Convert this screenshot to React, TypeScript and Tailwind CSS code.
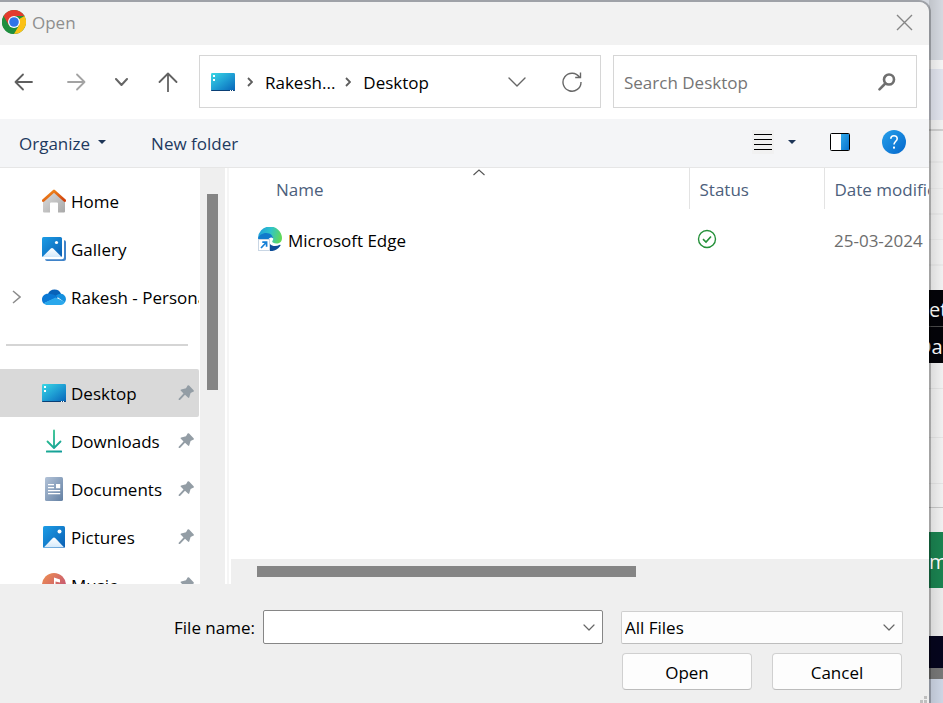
import type { ReactNode } from "react";

const FONT = "font-['Open_Sans','Noto_Sans',sans-serif]";

function ChromeIcon() {
  return (
    <svg width="24" height="24" viewBox="0 0 24 24" aria-hidden="true">
      <circle cx="12" cy="12" r="12" fill="#1e8e3e" />
      <path d="M12 12 L22.4 6 A12 12 0 0 1 12 24 L8 18 Z" fill="#fbc116" />
      <path d="M12 12 L1.6 6 A12 12 0 0 0 12 24 L17.2 15 Z" fill="#1e8e3e" />
      <path d="M1.6 6 A12 12 0 0 1 22.4 6 L12 6 L6.8 15 Z" fill="#e33b2e" />
      <circle cx="12" cy="12" r="6" fill="#fff" />
      <circle cx="12" cy="12" r="4.8" fill="#2f74e8" />
    </svg>
  );
}

function DesktopIcon() {
  return (
    <svg width="24" height="18" viewBox="0 0 24 18" aria-hidden="true">
      <defs>
        <linearGradient id="desktop-fill" x1="0" y1="0" x2="1" y2="1">
          <stop offset="0" stopColor="#3ad8e4" />
          <stop offset="0.5" stopColor="#1f9fd4" />
          <stop offset="1" stopColor="#0763b8" />
        </linearGradient>
      </defs>
      <rect width="24" height="18" rx="1.2" fill="url(#desktop-fill)" />
      <path d="M0 17h24v0a1 1 0 0 1-1 1H1a1 1 0 0 1-1-1z" fill="#0a3f75" />
      <path d="M2 2h2v2H2zM2 6h2v2H2zM19 17h1v1h-1zM21 17h1v1h-1z" fill="#fff" />
    </svg>
  );
}

function HomeIcon() {
  return (
    <svg width="24" height="24" viewBox="0 0 24 24" aria-hidden="true">
      <defs>
        <linearGradient id="home-wall" x1="0" y1="0" x2="1" y2="1">
          <stop offset="0" stopColor="#dedede" />
          <stop offset="1" stopColor="#a8a8a8" />
        </linearGradient>
        <linearGradient id="home-roof" x1="0" y1="0" x2="1" y2="1">
          <stop offset="0" stopColor="#f7941d" />
          <stop offset="1" stopColor="#cf3f0e" />
        </linearGradient>
      </defs>
      <path d="M1 11 L12 2 L23 11 V22.500a1 1 0 0 1-1 1H16V14.500a1 1 0 0 0-1-1H9a1 1 0 0 0-1 1V23.500H2a1 1 0 0 1-1-1z" fill="url(#home-wall)" />
      <path d="M1.300 11.500 L12 2 L22.700 11.500" fill="none" stroke="url(#home-roof)" strokeWidth="2.800" strokeLinecap="round" strokeLinejoin="round" />
    </svg>
  );
}

function PictureDefs() {
  return (
    <defs>
      <linearGradient id="picture-sky" x1="0" y1="0" x2="1" y2="1">
        <stop offset="0" stopColor="#1c9de6" />
        <stop offset="1" stopColor="#0b5fb3" />
      </linearGradient>
      <linearGradient id="picture-hill" x1="0" y1="0" x2="0" y2="1">
        <stop offset="0" stopColor="#ffffff" />
        <stop offset="1" stopColor="#d3e9fb" />
      </linearGradient>
    </defs>
  );
}

function GalleryIcon() {
  return (
    <svg width="24" height="24" viewBox="0 0 24 24" aria-hidden="true">
      <PictureDefs />
      <path d="M22 3.200a1.800 1.800 0 0 1 2 1.800V21.500a2.500 2.500 0 0 1-2.500 2.500H5a2 2 0 0 1-2-1.800h17a2 2 0 0 0 2-2z" fill="#3f83c9" />
      <rect width="20" height="20" rx="1.500" fill="url(#picture-sky)" />
      <path d="M0.800 19.500 L8.800 11.500 a1.800 1.800 0 0 1 2.400 0 L19.200 19.500 a1.500 1.500 0 0 1-0.800 0.500H1.600a1.500 1.500 0 0 1-0.800-0.500z" fill="url(#picture-hill)" />
      <circle cx="14.500" cy="5.500" r="1.600" fill="#fff" />
    </svg>
  );
}

function PicturesIcon() {
  return (
    <svg width="24" height="24" viewBox="0 0 24 24" aria-hidden="true">
      <PictureDefs />
      <rect x="1" y="1" width="22" height="22" rx="1.600" fill="url(#picture-sky)" />
      <path d="M2 22.200 L10.600 13.200 a2 2 0 0 1 2.800 0 L22 22.200 a1.500 1.500 0 0 1-0.600 0.300H2.600a1.500 1.500 0 0 1-0.600-0.300z" fill="url(#picture-hill)" />
      <circle cx="17.500" cy="6.500" r="2" fill="#fff" />
    </svg>
  );
}

function CloudIcon() {
  return (
    <svg width="24" height="16" viewBox="0 0 24 16" aria-hidden="true">
      <path d="M6 5 A7 7 0 0 1 19 4.800 L14 10 Z" fill="#0862b8" />
      <path d="M6 4.800 C2.500 4.700 0 7.300 0 10.400 C0 12 0.600 13.400 1.700 14.400 L16 8 C13 6 9.500 4.800 6 4.800z" fill="#0a78d4" />
      <path d="M19 4.800 C17 4.700 15.500 5.400 13.800 6.800 L22.800 13.500 C25.200 10.500 23.500 5.200 19 4.800z" fill="#1490df" />
      <path d="M1.500 14.200 L13.700 8.500 L23 13 C22.200 15 20.500 16 18.800 16 H5.500 C4 16 2.500 15.300 1.500 14.200z" fill="#2aa8ec" />
    </svg>
  );
}

function DownloadsIcon() {
  return (
    <svg width="24" height="24" viewBox="0 0 24 24" fill="none" aria-hidden="true">
      <defs>
        <linearGradient id="download-line" gradientUnits="userSpaceOnUse" x1="4" y1="0" x2="20" y2="24">
          <stop offset="0" stopColor="#35c98a" />
          <stop offset="1" stopColor="#0e9a9a" />
        </linearGradient>
      </defs>
      <path d="M12.010 1.500 L12 18.500 M5.500 12.500 L12 19 L18.500 12.500" stroke="url(#download-line)" strokeWidth="1.800" strokeLinecap="round" strokeLinejoin="round" />
      <rect x="4" y="21.500" width="16" height="2" rx="0.500" fill="url(#download-line)" />
    </svg>
  );
}

function DocumentsIcon() {
  return (
    <svg width="24" height="24" viewBox="0 0 24 24" aria-hidden="true">
      <defs>
        <linearGradient id="document-page" x1="0" y1="0" x2="1" y2="1">
          <stop offset="0" stopColor="#b3c3d8" />
          <stop offset="1" stopColor="#6380a3" />
        </linearGradient>
      </defs>
      <rect x="3" width="18" height="24" rx="1.600" fill="url(#document-page)" />
      <path d="M6 7h6v1.300H6zM6 10h6v1.300H6zM14 7h4.200v4.200H14zM6 13h12.200v1.300H6zM6 16h12.200v1.300H6z" fill="#fff" />
    </svg>
  );
}

function MusicIcon() {
  return (
    <svg width="24" height="24" viewBox="0 0 24 24" aria-hidden="true">
      <defs>
        <linearGradient id="music-disc" x1="0" y1="0" x2="1" y2="1">
          <stop offset="0" stopColor="#f0914f" />
          <stop offset="1" stopColor="#b8457d" />
        </linearGradient>
      </defs>
      <circle cx="12" cy="12" r="12" fill="url(#music-disc)" />
      <path d="M12 4.500 L18 6.500 V9.500 L13.500 8.500 V15.500 A3 3 0 1 1 12 13z" fill="#fff" />
    </svg>
  );
}

function PinIcon() {
  return (
    <svg width="16" height="16" viewBox="0 0 16 16" aria-hidden="true" className="flex-none">
      <path
        d="M9.600 0.600 a1 1 0 0 1 1.500 0 L15.600 5.300 a0.900 0.900 0 0 1-0.500 1.500 L12.600 8 L11.300 12.300 a0.800 0.800 0 0 1-1.300 0.300 L7 9.800 L2 15 H0.700 V13.700 L5.500 8.400 L2.900 5.800 a0.800 0.800 0 0 1 0.300-1.300 L8 3.200z"
        fill="#939da5"
      />
    </svg>
  );
}

function EdgeShortcutIcon() {
  return (
    <svg width="24" height="24" viewBox="0 0 24 24" aria-hidden="true" className="flex-none">
      <defs>
        <linearGradient id="edge-top" x1="0" y1="0.300" x2="1" y2="0.500">
          <stop offset="0" stopColor="#1f9fdc" />
          <stop offset="0.500" stopColor="#2fc3c9" />
          <stop offset="1" stopColor="#62d957" />
        </linearGradient>
      </defs>
      <path d="M0 12 A12 12 0 0 1 24 11 C24 14.800 21.500 16.500 18.500 16.500 C15.800 16.500 14.200 15.500 14.200 14.600 C14.200 14 15.200 13.600 15.200 11.600 C15.200 9.500 13 8 10 8 C5 8 1 10 0 12z" fill="url(#edge-top)" />
      <path d="M0 12 C0.500 8.300 4.500 6 8.300 6 C12.500 6 15.200 9 15.200 11.600 C14 10 11 10 10 13.500 C9.500 17 11 22 15 23.700 C7 25.500 0 19.500 0 12z" fill="#127acb" />
      <path d="M12 17 C14.500 19.800 18.500 19.500 21.800 17.800 C22.600 17.600 22.800 18.200 22.400 18.700 C19.500 23 15.500 24.500 12 23.900z" fill="#0d4d98" />
      <rect x="0.500" y="12.500" width="11" height="11" fill="#fff" stroke="#c9d6e4" />
      <path d="M3 21 L8.200 15.500 M4.300 15.200 H8.600 V19.700" fill="none" stroke="#137fd6" strokeWidth="1.700" />
    </svg>
  );
}

function ChevronDown({ width, height, stroke }: { width: number; height: number; stroke: number }) {
  return (
    <svg width={width} height={height} viewBox={`0 0 ${width} ${height}`} fill="none" aria-hidden="true">
      <path d={`M1 1 L${width / 2} ${height - 1} L${width - 1} 1`} stroke="#666" strokeWidth={stroke} strokeLinecap="round" strokeLinejoin="round" />
    </svg>
  );
}

function CrumbChevron() {
  return (
    <svg width="6" height="10" viewBox="0 0 6 10" fill="none" aria-hidden="true">
      <path d="M1 1 L5 5 L1 9" stroke="#5d5d5d" strokeWidth="1.800" />
    </svg>
  );
}

function SideItem({
  icon,
  label,
  pinned = false,
  active = false,
  expandable = false,
}: {
  icon: ReactNode;
  label: string;
  pinned?: boolean;
  active?: boolean;
  expandable?: boolean;
}) {
  return (
    <li>
      <button
        type="button"
        className={`flex h-12 w-[199px] items-center rounded-r-[2px] pr-[5px] text-left text-black ${active ? "bg-[#d9d9d9]" : "bg-white"}`}
      >
        <span className="flex w-[42px] flex-none pl-3">
          {expandable && (
            <svg width="9" height="14" viewBox="0 0 9 14" fill="none" aria-hidden="true">
              <path d="M1 1 L8 7 L1 13" stroke="#8c8c8c" strokeWidth="1.500" />
            </svg>
          )}
        </span>
        <span className="flex w-[29px] flex-none">{icon}</span>
        <span className={`flex-1 overflow-hidden pt-[2px] whitespace-nowrap ${pinned ? "" : "-mr-[5px]"}`}>{label}</span>
        {pinned && <PinIcon />}
      </button>
    </li>
  );
}

function BackgroundPage() {
  return (
    <div className="relative flex w-[14px] flex-none flex-col overflow-hidden bg-[#f1f1f1] text-[20px] leading-9 whitespace-nowrap text-white">
      <div className="h-[60px] bg-[#d5d9e0]" />
      <div className="h-[9px] bg-[#f5f5f5]" />
      <div className="h-[51px] bg-[#e0e3ed]" />
      <div className="h-[9px]" />
      <div className="h-[2px] bg-[#cfcfcf]" />
      <div className="h-8 border-b-2 border-[#e9e9e9]" />
      <div className="h-[26px] border-b border-[#e9e9e9]" />
      <div className="h-[26px] border-b-2 border-[#e9e9e9]" />
      <div className="h-[25px] border-b border-[#e9e9e9]" />
      <div className="h-[26px] border-b-2 border-[#e9e9e9]" />
      <div className="h-6" />
      <div className="flex h-[37px] items-center border-b border-[#4a4a4a] bg-[#030308] pt-1">et</div>
      <div className="flex h-9 items-center bg-[#030308] pt-1">
        <span className="-ml-3">Da</span>
      </div>
      <div className="h-[26px] border-b border-[#e4e4e4]" />
      <div className="h-[49px] border-b border-[#e4e4e4]" />
      <div className="h-[46px] border-b border-[#e4e4e4]" />
      <div className="h-6 border-b border-[#c8c8c8]" />
      <div className="h-6" />
      <div className="flex h-14 items-center bg-[#1a8250] pt-1">m</div>
      <div className="h-12 bg-[#ececec]" />
      <div className="h-8 bg-[#05051d]" />
      <div className="h-[11px] bg-[#777]" />
      <div className="flex-1 bg-[#cdd5e4]" />
      <div className="absolute inset-0 bg-linear-to-r from-black/10 to-transparent" />
    </div>
  );
}

function TitleBar() {
  return (
    <header className="flex h-[43px] flex-none items-center bg-[#f2f2f2] pr-4 pb-[3px] pl-[2px] text-[#8e8e8e]">
      <ChromeIcon />
      <h1 className="ml-[6px] flex-1 pt-[2px]">Open</h1>
      <button type="button" aria-label="Close">
        <svg width="17" height="17" viewBox="0 0 17 17" fill="none" aria-hidden="true">
          <path d="M1 1 L16 16 M16 1 L1 16" stroke="#868686" strokeWidth="1.400" />
        </svg>
      </button>
    </header>
  );
}

function NavigationBar() {
  return (
    <nav className="flex h-[74px] flex-none items-center gap-3 bg-white pr-3 pb-px text-black">
      <div className="flex w-[187px] flex-none items-center pl-[14px]">
        <button type="button" aria-label="Back" className="w-[53px]">
          <svg width="19" height="18" viewBox="0 0 19 18" fill="none" aria-hidden="true">
            <path d="M9 1.500 L1.500 9 L9 16.500 M1.500 9 H18" stroke="#5f5f5f" strokeWidth="1.800" strokeLinecap="round" strokeLinejoin="round" />
          </svg>
        </button>
        <button type="button" aria-label="Forward" className="w-[48px]">
          <svg width="19" height="18" viewBox="0 0 19 18" fill="none" aria-hidden="true">
            <path d="M10 1.500 L17.500 9 L10 16.500 M17.500 9 H1" stroke="#a3a3a3" strokeWidth="1.800" strokeLinecap="round" strokeLinejoin="round" />
          </svg>
        </button>
        <button type="button" aria-label="Recent locations" className="w-[43px]">
          <ChevronDown width={13} height={8} stroke={2} />
        </button>
        <button type="button" aria-label="Up">
          <svg width="20" height="20" viewBox="0 0 20 20" fill="none" aria-hidden="true">
            <path d="M1.500 10 L10 1.500 L18.500 10 M10 1.500 V19.500" stroke="#626262" strokeWidth="1.800" strokeLinecap="round" strokeLinejoin="round" />
          </svg>
        </button>
      </div>
      <div className="flex h-[53px] min-w-0 flex-1 items-center border border-[#d6d6d6] pt-px pr-[18px] pl-[11px]">
        <DesktopIcon />
        <span className="ml-3"><CrumbChevron /></span>
        <button type="button" className="ml-3 pt-px">Rakesh...</button>
        <span className="ml-[10px]"><CrumbChevron /></span>
        <button type="button" className="ml-3 pt-px">Desktop</button>
        <span className="flex-1" />
        <button type="button" aria-label="Previous locations">
          <ChevronDown width={18} height={10} stroke={1.4} />
        </button>
        <button type="button" aria-label="Refresh" className="ml-9">
          <svg width="20" height="20" viewBox="0 0 20 20" fill="none" aria-hidden="true">
            <path d="M17.500 5.200 A9 9 0 1 0 19 10 M18.500 0.500 V5.500 H13.200" stroke="#686868" strokeWidth="1.400" />
          </svg>
        </button>
      </div>
      <div className="flex h-[53px] w-[304px] flex-none items-center border border-[#d6d6d6] pt-px pr-5 pl-[10px]">
        <input
          type="text"
          aria-label="Search Desktop"
          placeholder="Search Desktop"
          className="min-w-0 flex-1 bg-transparent pt-px outline-none placeholder:text-[#757575]"
        />
        <svg width="18" height="18" viewBox="0 0 18 18" fill="none" aria-hidden="true">
          <circle cx="11" cy="6.500" r="5" stroke="#6f6f6f" strokeWidth="2.600" />
          <path d="M7.300 10.500 L1.500 16.300" stroke="#6f6f6f" strokeWidth="2.600" strokeLinecap="round" />
        </svg>
      </div>
    </nav>
  );
}

function Triangle() {
  return (
    <svg width="8" height="4" viewBox="0 0 8 4" aria-hidden="true">
      <path d="M0 0 H8 L4 4z" fill="#1d3557" />
    </svg>
  );
}

function CommandBar() {
  return (
    <div className="flex h-[49px] flex-none items-center border-b border-[#e6e6e6] bg-[#f4f5f7] pr-[23px] pb-[2px] pl-[19px] text-[#1e3a5f]">
      <button type="button" className="flex items-center gap-2">
        <span className="pt-1">Organize</span>
        <Triangle />
      </button>
      <button type="button" className="ml-[45px] pt-1">New folder</button>
      <span className="flex-1" />
      <button type="button" aria-label="Change view" className="flex h-6 w-[22px] items-center justify-center bg-[#f1f1f1]">
        <svg width="18" height="17" viewBox="0 0 18 17" aria-hidden="true">
          <path d="M0 0h18v1H0zM0 5h18v1H0zM0 10h18v1H0zM0 15h18v1H0z" fill="#000" />
        </svg>
      </button>
      <button type="button" aria-label="More view options" className="ml-[14px]">
        <Triangle />
      </button>
      <button type="button" aria-label="Show the preview pane" className="ml-[34px]">
        <svg width="20" height="18" viewBox="0 0 20 18" aria-hidden="true">
          <defs>
            <linearGradient id="preview-pane" x1="0" y1="0" x2="1" y2="1">
              <stop offset="0" stopColor="#2fa9ea" />
              <stop offset="1" stopColor="#0873cf" />
            </linearGradient>
          </defs>
          <rect x="0.500" y="0.500" width="19" height="17" rx="1" fill="#fff" stroke="#000" />
          <path d="M11 1h8v16h-8z" fill="url(#preview-pane)" />
        </svg>
      </button>
      <button type="button" aria-label="Get help" className="ml-8">
        <svg width="24" height="24" viewBox="0 0 24 24" fill="none" aria-hidden="true">
          <defs>
            <linearGradient id="help-disc" x1="0" y1="0" x2="1" y2="1">
              <stop offset="0" stopColor="#27a0ea" />
              <stop offset="1" stopColor="#0467cc" />
            </linearGradient>
          </defs>
          <circle cx="12" cy="12" r="12" fill="url(#help-disc)" />
          <path d="M8.800 8.800 C8.800 4.600 15.200 4.700 15.200 8.700 C15.200 11.200 12 11.400 12 14.600" stroke="#fff" strokeWidth="1.600" />
          <rect x="11" y="16.600" width="2" height="2" fill="#fff" />
        </svg>
      </button>
    </div>
  );
}

function Sidebar() {
  return (
    <aside className="flex w-[229px] flex-none border-r-2 border-[#f5f5f5] bg-white">
      <ul className="w-[200px] flex-none overflow-hidden pt-[9px]">
        <SideItem icon={<HomeIcon />} label="Home" />
        <SideItem icon={<GalleryIcon />} label="Gallery" />
        <SideItem icon={<CloudIcon />} label="Rakesh - Personal" expandable />
        <li aria-hidden="true" className="flex h-12 items-center pr-3 pl-[6px]">
          <hr className="flex-1 border-t-2 border-[#d5d5d5]" />
        </li>
        <SideItem icon={<DesktopIcon />} label="Desktop" pinned active />
        <SideItem icon={<DownloadsIcon />} label="Downloads" pinned />
        <SideItem icon={<DocumentsIcon />} label="Documents" pinned />
        <SideItem icon={<PicturesIcon />} label="Pictures" pinned />
        <SideItem icon={<MusicIcon />} label="Music" pinned />
      </ul>
      <div className="w-[25px] flex-none bg-[#efefef] pt-[26px] pl-[7px]">
        <div className="h-[196px] w-[11px] bg-[#858585]" />
      </div>
    </aside>
  );
}

function FileList() {
  return (
    <section className="flex min-w-0 flex-1 flex-col bg-white pl-[2px]">
      <div className="relative min-h-0 flex-1 overflow-hidden">
        <table className="w-full table-fixed border-collapse text-left whitespace-nowrap">
          <colgroup>
            <col />
            <col className="w-[135px]" />
            <col className="w-[105px]" />
          </colgroup>
          <thead className="text-[#4c607c]">
            <tr className="h-[41px]">
              <th scope="col" className="pt-[2px] pl-[45px] font-normal">Name</th>
              <th scope="col" className="border-l border-[#e3e3e3] pt-[2px] pl-[10px] font-normal">Status</th>
              <th scope="col" className="overflow-hidden border-l border-[#e3e3e3] pt-[2px] pl-[10px] font-normal">Date modified</th>
            </tr>
          </thead>
          <tbody>
            <tr className="h-[60px]">
              <td className="pl-[27px] text-black">
                <span className="flex items-center gap-[6px]">
                  <EdgeShortcutIcon />
                  <span className="pt-[3px]">Microsoft Edge</span>
                </span>
              </td>
              <td className="pl-2">
                <svg width="20" height="20" viewBox="0 0 20 20" fill="none" role="img" aria-label="Available on this device">
                  <circle cx="10" cy="10" r="8.500" stroke="#25913a" strokeWidth="1.400" />
                  <path d="M6 10.200 L9 13 L14 7.500" stroke="#25913a" strokeWidth="1.600" />
                </svg>
              </td>
              <td className="overflow-hidden pt-[3px] pl-[10px] text-[#6d6d6d]">25-03-2024</td>
            </tr>
          </tbody>
        </table>
        <svg width="12" height="7" viewBox="0 0 12 7" fill="none" aria-hidden="true" className="absolute top-[1px] left-[242px]">
          <path d="M0.500 6 L6 1 L11.500 6" stroke="#555" strokeWidth="1.100" />
        </svg>
      </div>
      <div className="h-[25px] flex-none bg-[#efefef] pt-[7px] pl-[26px]">
        <div className="h-[11px] w-[379px] bg-[#858585]" />
      </div>
    </section>
  );
}

function Footer() {
  return (
    <footer className="relative h-[119px] flex-none bg-[#efefef] pt-[26px] pr-[26px] text-black">
      <div className="flex items-center">
        <label htmlFor="file-name" className="w-[255px] flex-none pt-[2px] text-right">File name:</label>
        <div className="ml-2 flex h-[34px] min-w-0 flex-1 items-center rounded-[2px] border border-[#868686] bg-white pr-[7px] pl-1">
          <input id="file-name" type="text" className="min-w-0 flex-1 outline-none" />
          <button type="button" aria-label="Recent file names">
            <ChevronDown width={12} height={7} stroke={1.2} />
          </button>
        </div>
        <div className="relative ml-[18px] w-[282px] flex-none">
          <select aria-label="File type" className="h-[33px] w-full appearance-none rounded-[2px] border border-[#cfcfcf] border-b-[#bdbdbd] bg-[#fdfdfd] px-[3px] pt-[2px] leading-6">
            <option>All Files</option>
          </select>
          <span className="pointer-events-none absolute inset-y-0 right-2 flex items-center">
            <ChevronDown width={12} height={7} stroke={1.2} />
          </span>
        </div>
      </div>
      <div className="mt-[9px] flex justify-end gap-5 pr-px">
        <button type="button" className="h-[37px] w-[130px] rounded-[4px] border border-[#d0d0d0] border-b-[#bcbcbc] bg-[#fdfdfd] pt-[2px]">Open</button>
        <button type="button" className="h-[37px] w-[130px] rounded-[4px] border border-[#d0d0d0] border-b-[#bcbcbc] bg-[#fdfdfd] pt-[2px]">Cancel</button>
      </div>
      <svg width="9" height="7" viewBox="0 0 9 7" aria-hidden="true" className="absolute right-px bottom-0">
        <path d="M5 0h3v3H5zM5 4h3v3H5zM1 4h3v3H1z" fill="#bfbfbf" />
      </svg>
    </footer>
  );
}

export default function App() {
  return (
    <div className={`flex h-screen overflow-hidden bg-[#d5d9e0] text-[17px] leading-6 ${FONT}`}>
      <main className="relative z-10 -mr-[2px] flex min-w-0 flex-1 flex-col overflow-hidden rounded-tr-[12px] border-t-2 border-r-2 border-black/25 bg-[#f2f2f2] bg-clip-padding">
        <TitleBar />
        <NavigationBar />
        <CommandBar />
        <div className="flex min-h-0 flex-1">
          <Sidebar />
          <FileList />
        </div>
        <Footer />
      </main>
      <BackgroundPage />
    </div>
  );
}
